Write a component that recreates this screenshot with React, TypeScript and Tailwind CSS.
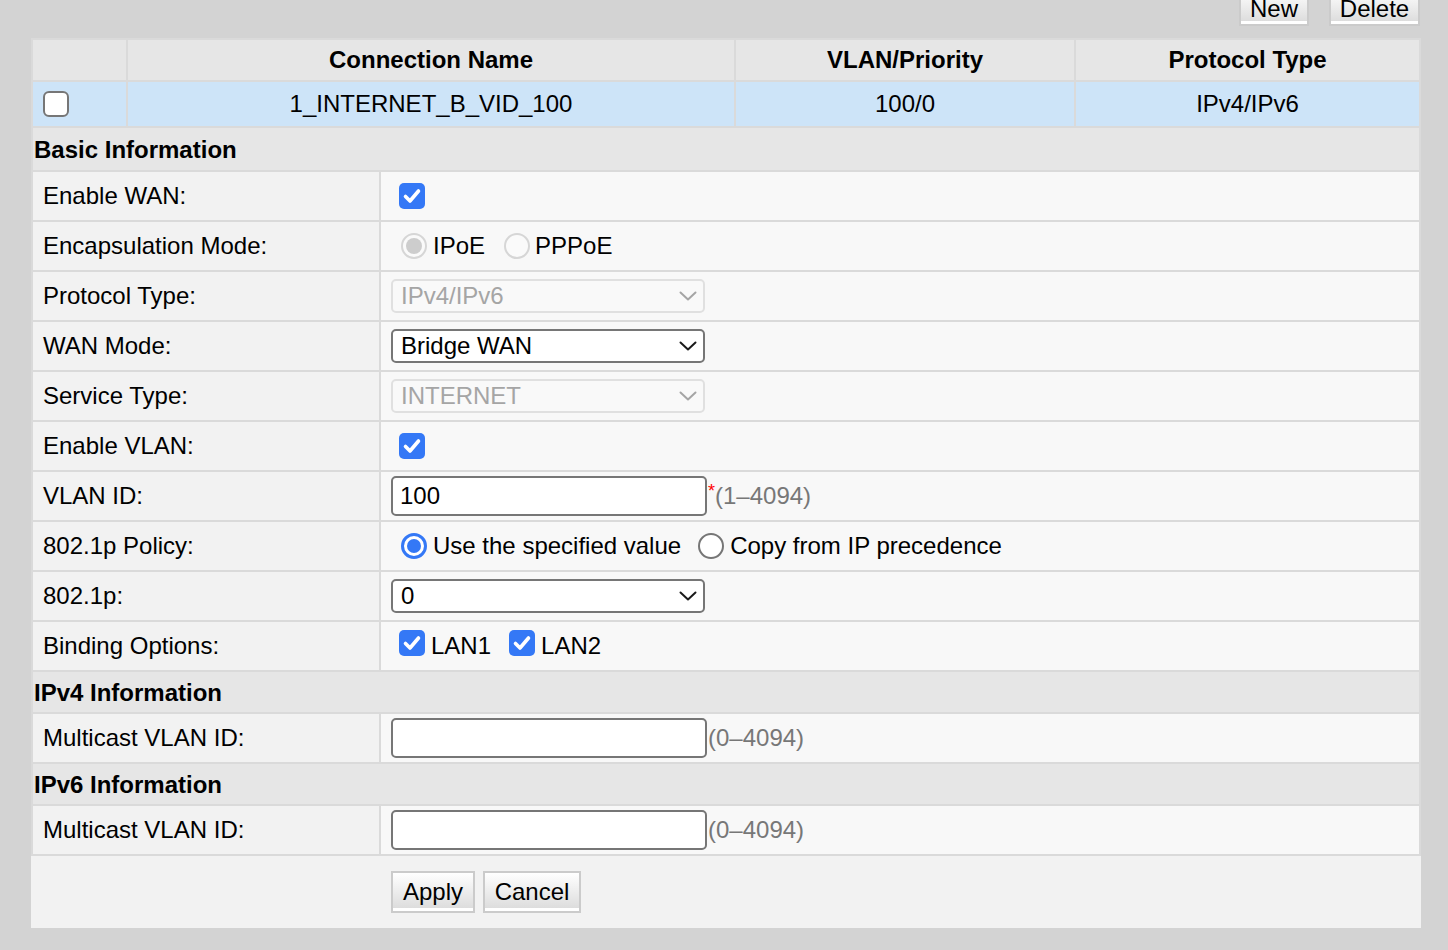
import React from "react";

const Chevron = ({ color }: { color: string }) => (
  <svg width="18" height="10" viewBox="0 0 18 10" fill="none">
    <path d="M1.5 1.5 L9 8.5 L16.5 1.5" stroke={color} strokeWidth="2" strokeLinecap="round" strokeLinejoin="round" />
  </svg>
);

const CheckBox = () => (
  <div className="w-[26px] h-[26px] rounded-[5px] bg-[#3478f6] flex items-center justify-center shrink-0">
    <svg width="26" height="26" viewBox="0 0 26 26" fill="none">
      <path d="M6.5 13.5 L11 18 L19.5 8" stroke="#fff" strokeWidth="3.6" strokeLinecap="round" strokeLinejoin="round" />
    </svg>
  </div>
);

const RadioBlue = () => (
  <div className="w-[26px] h-[26px] rounded-full border-[3px] border-[#3478f6] bg-white flex items-center justify-center shrink-0">
    <div className="w-[14px] h-[14px] rounded-full bg-[#3478f6]" />
  </div>
);

const RadioOff = ({ disabled }: { disabled?: boolean }) => (
  <div
    className={
      disabled
        ? "w-[26px] h-[26px] rounded-full border-2 border-[#d6d6d6] bg-[#fafafa] shrink-0"
        : "w-[26px] h-[26px] rounded-full border-2 border-[#767676] bg-white shrink-0"
    }
  />
);

const RadioDisabledOn = () => (
  <div className="w-[26px] h-[26px] rounded-full border-2 border-[#d6d6d6] bg-[#fafafa] flex items-center justify-center shrink-0">
    <div className="w-[16px] h-[16px] rounded-full bg-[#cdcdcd]" />
  </div>
);

const Select = ({ value, disabled }: { value: string; disabled?: boolean }) => (
  <div
    className={
      disabled
        ? "w-[314px] h-[34px] border-2 border-[#e0e0e0] rounded-[5px] bg-[#f9f9f9] flex items-center justify-between pl-[8px] pr-[6px] text-[#a5a5a5]"
        : "w-[314px] h-[34px] border-2 border-[#767676] rounded-[5px] bg-white flex items-center justify-between pl-[8px] pr-[6px] text-black"
    }
  >
    <span className="leading-none">{value}</span>
    <Chevron color={disabled ? "#a5a5a5" : "#1a1a1a"} />
  </div>
);

const TextInput = ({ value }: { value?: string }) => (
  <div className="w-[316px] h-[40px] border-2 border-[#767676] rounded-[5px] bg-white flex items-center pl-[7px] shrink-0">
    <span className="leading-none">{value ?? ""}</span>
  </div>
);

const Btn = ({ children, className }: { children: React.ReactNode; className?: string }) => (
  <div
    className={
      "border-2 border-[#cbcbcb] bg-gradient-to-b from-white to-[#dadada] shadow-[inset_0_-3px_0_#ffffff] flex items-center justify-center leading-none text-black " +
      (className ?? "")
    }
  >
    {children}
  </div>
);

const Row = ({ label, children }: { label: string; children: React.ReactNode }) => (
  <div className="grid grid-cols-[346px_1038px] gap-x-[2px] h-[48px]">
    <div className="bg-[#f2f2f2] flex items-center pl-[10px]">{label}</div>
    <div className="bg-[#f8f8f8] flex items-center pl-[10px]">{children}</div>
  </div>
);

const Section = ({ title }: { title: string }) => (
  <div className="bg-[#e6e6e6] flex items-center pl-[1px] pt-[2px] font-bold">{title}</div>
);

export default function App() {
  return (
    <div className="w-[1448px] h-[950px] bg-[#d3d3d3] font-['Liberation_Sans',Arial,sans-serif] text-[24px] text-black overflow-hidden">
      {/* top buttons */}
      <div className="h-[38px] flex justify-end gap-[20px] pr-[28px]">
        <Btn className="w-[70px] h-[38px] -mt-[12px] pt-[4px]">New</Btn>
        <Btn className="w-[91px] h-[38px] -mt-[12px] pt-[4px]">Delete</Btn>
      </div>

      {/* panel */}
      <div className="ml-[31px] w-[1390px] bg-[#dadada] px-[2px] pt-[2px] flex flex-col">
        {/* list table */}
        <div className="grid grid-cols-[93px_606px_338px_343px] gap-[2px]">
          <div className="bg-[#e6e6e6] h-[40px]" />
          <div className="bg-[#e6e6e6] h-[40px] flex items-center justify-center font-bold">Connection Name</div>
          <div className="bg-[#e6e6e6] h-[40px] flex items-center justify-center font-bold">VLAN/Priority</div>
          <div className="bg-[#e6e6e6] h-[40px] flex items-center justify-center font-bold">Protocol Type</div>
          <div className="bg-[#cde4f8] h-[44px] flex items-center pl-[10px]">
            <div className="w-[26px] h-[26px] rounded-[6px] border-2 border-[#767676] bg-white" />
          </div>
          <div className="bg-[#cde4f8] h-[44px] flex items-center justify-center">1_INTERNET_B_VID_100</div>
          <div className="bg-[#cde4f8] h-[44px] flex items-center justify-center">100/0</div>
          <div className="bg-[#cde4f8] h-[44px] flex items-center justify-center">IPv4/IPv6</div>
        </div>

        <div className="mt-[2px] flex flex-col gap-[2px]">
          <div className="h-[42px] grid">
            <Section title="Basic Information" />
          </div>
          <Row label="Enable WAN:">
            <div className="ml-[8px]">
              <CheckBox />
            </div>
          </Row>
          <Row label="Encapsulation Mode:">
            <div className="flex items-center ml-[10px]">
              <RadioDisabledOn />
              <span className="ml-[6px]">IPoE</span>
              <span className="ml-[19px]">
                <RadioOff disabled />
              </span>
              <span className="ml-[5px]">PPPoE</span>
            </div>
          </Row>
          <Row label="Protocol Type:">
            <Select value="IPv4/IPv6" disabled />
          </Row>
          <Row label="WAN Mode:">
            <Select value="Bridge WAN" />
          </Row>
          <Row label="Service Type:">
            <Select value="INTERNET" disabled />
          </Row>
          <Row label="Enable VLAN:">
            <div className="ml-[8px]">
              <CheckBox />
            </div>
          </Row>
          <Row label="VLAN ID:">
            <div className="flex items-center">
              <TextInput value="100" />
              <span className="text-[#ff0000] text-[18px] self-start mt-[2px] ml-[1px]">*</span>
              <span className="text-[#777777]">(1–4094)</span>
            </div>
          </Row>
          <Row label="802.1p Policy:">
            <div className="flex items-center ml-[10px]">
              <RadioBlue />
              <span className="ml-[6px]">Use the specified value</span>
              <span className="ml-[17px]">
                <RadioOff />
              </span>
              <span className="ml-[6px]">Copy from IP precedence</span>
            </div>
          </Row>
          <Row label="802.1p:">
            <Select value="0" />
          </Row>
          <Row label="Binding Options:">
            <div className="flex items-center -mt-[6px] ml-[8px]">
              <CheckBox />
              <span className="ml-[6px] mt-[6px]">LAN1</span>
              <span className="ml-[18px]">
                <CheckBox />
              </span>
              <span className="ml-[6px] mt-[6px]">LAN2</span>
            </div>
          </Row>
          <div className="h-[40px] grid">
            <Section title="IPv4 Information" />
          </div>
          <Row label="Multicast VLAN ID:">
            <div className="flex items-center">
              <TextInput />
              <span className="text-[#777777] ml-[1px]">(0–4094)</span>
            </div>
          </Row>
          <div className="h-[40px] grid">
            <Section title="IPv6 Information" />
          </div>
          <Row label="Multicast VLAN ID:">
            <div className="flex items-center">
              <TextInput />
              <span className="text-[#777777] ml-[1px]">(0–4094)</span>
            </div>
          </Row>
          <div className="-mx-[2px] h-[72px] bg-[#f2f2f2] flex items-start pt-[15px] pl-[360px] gap-[8px]">
            <Btn className="w-[84px] h-[42px]">Apply</Btn>
            <Btn className="w-[98px] h-[42px]">Cancel</Btn>
          </div>
        </div>
      </div>
    </div>
  );
}
